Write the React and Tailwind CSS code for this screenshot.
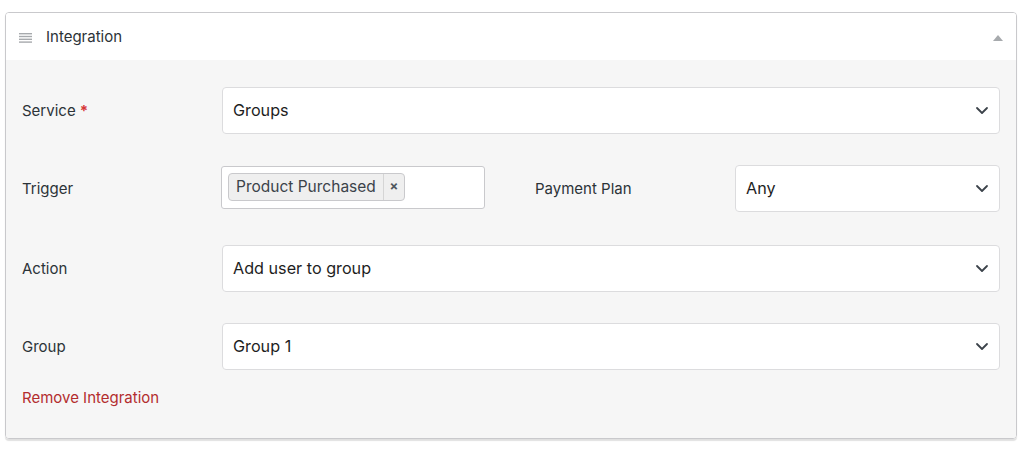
import { useState } from 'react';

function Chevron() {
    return (
        <svg className="w-[14px] h-[9px] text-[#3c434a]" viewBox="0 0 14 9" fill="none" stroke="currentColor" strokeWidth="1.8" strokeLinecap="round" strokeLinejoin="round">
            <path d="M2 2l5 5 5-5" />
        </svg>
    );
}

function Select({ value, className = '' }) {
    return (
        <div className={`flex items-center justify-between h-[47px] pl-[10px] pr-[10px] bg-white border border-[#dcdcde] rounded-[4px] text-[16.2px] text-[#1e1e1e] ${className}`}>
            <span>{value}</span>
            <Chevron />
        </div>
    );
}

function Label({ children, required }) {
    return (
        <div className="w-[200px] shrink-0 pt-[2px] text-[15px] text-[#2c3338]">
            {children}
            {required && <span className="text-[#d63638] font-bold ml-[4px]">*</span>}
        </div>
    );
}

export default function App() {
    const [open] = useState(true);

    return (
        <div className="w-[1024px] h-[452px] bg-white pt-[12px] px-[5px]" style={{ fontFamily: 'Inter, "Noto Sans", sans-serif' }}>
            <div className="w-[1012px] border border-[#c9c9cc] rounded-[4px] shadow-[0_2px_1px_rgba(0,0,0,0.12)] overflow-hidden">
                {/* Panel header */}
                <div className="flex items-center h-[47px] bg-white pl-[13px] pr-[13px] pt-[2px]">
                    <svg className="w-[13px] h-[10px] text-[#a7aaad]" viewBox="0 0 13 10" fill="currentColor">
                        <rect x="0" y="0" width="13" height="1.4" />
                        <rect x="0" y="2.8" width="13" height="1.4" />
                        <rect x="0" y="5.6" width="13" height="1.4" />
                        <rect x="0" y="8.4" width="13" height="1.4" />
                    </svg>
                    <span className="ml-[14px] text-[15px] text-[#2c3338]">Integration</span>
                    <svg className="ml-auto w-[10px] h-[6px] text-[#a7aaad]" viewBox="0 0 10 6" fill="currentColor">
                        <path d="M5 0l5 6H0z" />
                    </svg>
                </div>

                {/* Panel body */}
                {open && (
                    <div className="bg-[#f6f6f6] pl-[16px] pr-[16px] pt-[27px] pb-[28px]">
                        <div className="flex items-center">
                            <Label required>Service</Label>
                            <Select value="Groups" className="flex-1" />
                        </div>

                        <div className="flex items-center mt-[31px]">
                            <Label>Trigger</Label>
                            <div className="w-[264px] h-[43px] -ml-[1px] mb-[3px] flex items-center px-[6px] bg-white border border-[#c9c9cc] rounded-[3px]">
                                <div className="flex items-center h-[28px] bg-[#efefef] border border-[#c9c9cc] rounded-[4px] text-[15.5px] text-[#3c434a]">
                                    <span className="px-[7px]">Product Purchased</span>
                                    <span className="h-full w-[21px] flex items-center justify-center border-l border-[#d5d5d5] text-[13px] font-bold text-[#50575e]">×</span>
                                </div>
                            </div>
                            <div className="ml-[50px] w-[200px] pt-[2px] text-[15px] text-[#2c3338]">Payment Plan</div>
                            <Select value="Any" className="flex-1" />
                        </div>

                        <div className="flex items-center mt-[33px]">
                            <Label>Action</Label>
                            <Select value="Add user to group" className="flex-1" />
                        </div>

                        <div className="flex items-center mt-[31px]">
                            <Label>Group</Label>
                            <Select value="Group 1" className="flex-1" />
                        </div>

                        <div className="mt-[17px] text-[15px] text-[#b32d2e]">Remove Integration</div>
                    </div>
                )}
            </div>
        </div>
    );
}
